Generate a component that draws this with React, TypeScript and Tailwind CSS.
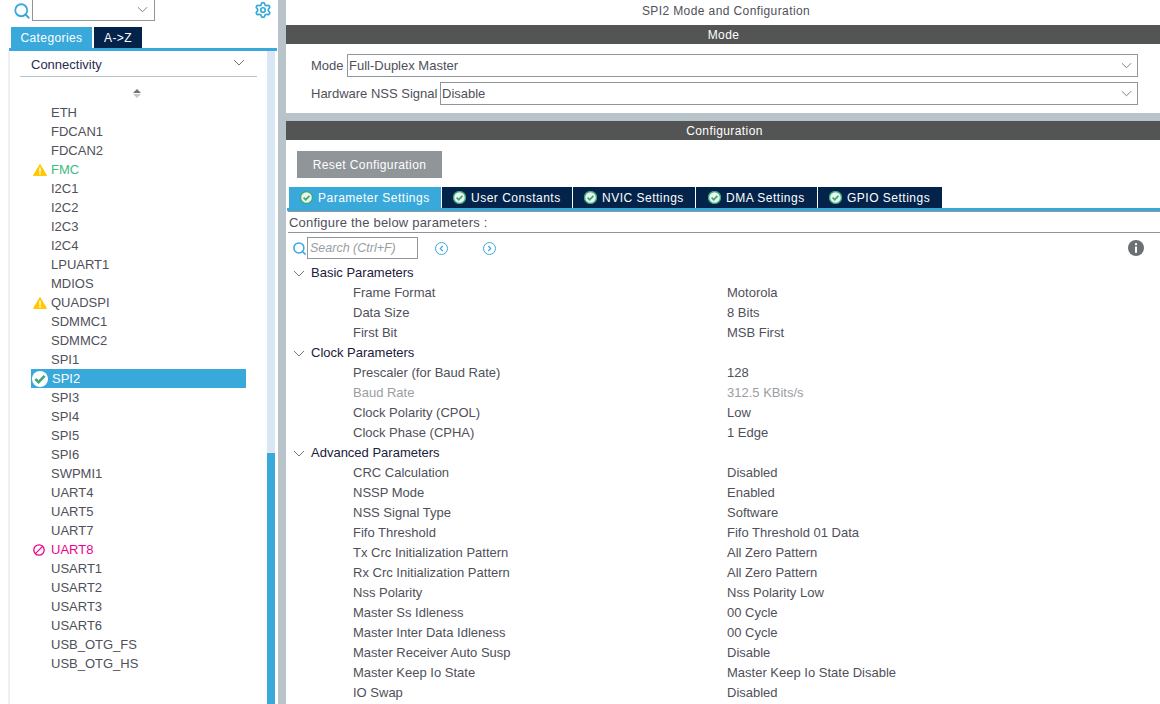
import { Search, Settings } from "lucide-react";

const font = "font-['Liberation_Sans',Arial,sans-serif]";

type Peripheral = { name: string; status?: "warn" | "ok" | "error" };

const peripherals: Peripheral[] = [
  { name: "ETH" },
  { name: "FDCAN1" },
  { name: "FDCAN2" },
  { name: "FMC", status: "warn" },
  { name: "I2C1" },
  { name: "I2C2" },
  { name: "I2C3" },
  { name: "I2C4" },
  { name: "LPUART1" },
  { name: "MDIOS" },
  { name: "QUADSPI", status: "warn" },
  { name: "SDMMC1" },
  { name: "SDMMC2" },
  { name: "SPI1" },
  { name: "SPI2", status: "ok" },
  { name: "SPI3" },
  { name: "SPI4" },
  { name: "SPI5" },
  { name: "SPI6" },
  { name: "SWPMI1" },
  { name: "UART4" },
  { name: "UART5" },
  { name: "UART7" },
  { name: "UART8", status: "error" },
  { name: "USART1" },
  { name: "USART2" },
  { name: "USART3" },
  { name: "USART6" },
  { name: "USB_OTG_FS" },
  { name: "USB_OTG_HS" },
];

const groups: { title: string; rows: [string, string, boolean?][] }[] = [
  {
    title: "Basic Parameters",
    rows: [
      ["Frame Format", "Motorola"],
      ["Data Size", "8 Bits"],
      ["First Bit", "MSB First"],
    ],
  },
  {
    title: "Clock Parameters",
    rows: [
      ["Prescaler (for Baud Rate)", "128"],
      ["Baud Rate", "312.5 KBits/s", true],
      ["Clock Polarity (CPOL)", "Low"],
      ["Clock Phase (CPHA)", "1 Edge"],
    ],
  },
  {
    title: "Advanced Parameters",
    rows: [
      ["CRC Calculation", "Disabled"],
      ["NSSP Mode", "Enabled"],
      ["NSS Signal Type", "Software"],
      ["Fifo Threshold", "Fifo Threshold 01 Data"],
      ["Tx Crc Initialization Pattern", "All Zero Pattern"],
      ["Rx Crc Initialization Pattern", "All Zero Pattern"],
      ["Nss Polarity", "Nss Polarity Low"],
      ["Master Ss Idleness", "00 Cycle"],
      ["Master Inter Data Idleness", "00 Cycle"],
      ["Master Receiver Auto Susp", "Disable"],
      ["Master Keep Io State", "Master Keep Io State Disable"],
      ["IO Swap", "Disabled"],
    ],
  },
];

const tabs = [
  { label: "Parameter Settings", width: "w-[152px]", pad: "pl-[11px]", active: true },
  { label: "User Constants", width: "w-[130px]", pad: "pl-[11px]" },
  { label: "NVIC Settings", width: "w-[122px]", pad: "pl-[11px]" },
  { label: "DMA Settings", width: "w-[121px]", pad: "pl-[12px]" },
  { label: "GPIO Settings", width: "w-[124px]", pad: "pl-[11px]" },
];

function Chevron({ className }: { className: string }) {
  return (
    <svg viewBox="0 0 12 7" className={className} fill="none" stroke="currentColor" strokeWidth="1">
      <path d="M1 1l5 5 5-5" />
    </svg>
  );
}

function Warn() {
  return (
    <svg viewBox="0 0 14 12" className="h-3 w-[14px]">
      <path d="M7 .5L13.6 11.6H.4z" fill="#ffc800" stroke="#ffc800" strokeLinejoin="round" />
      <rect x="6.3" y="3.6" width="1.4" height="4.6" fill="#fff" />
      <rect x="6.3" y="9" width="1.4" height="1.5" fill="#fff" />
    </svg>
  );
}

function OkBadge() {
  return (
    <svg viewBox="0 0 16 16" className="h-4 w-4">
      <circle cx="8" cy="8" r="8" fill="#fff" />
      <path d="M3.4 8l3.2 3.2 6-6.4" fill="none" stroke="#3fa878" strokeWidth="2.6" />
    </svg>
  );
}

function TabCheck() {
  return (
    <svg viewBox="0 0 13 13" className="h-[13px] w-[13px] shrink-0">
      <circle cx="6.5" cy="6.5" r="6" fill="#e8f5ee" stroke="#3fa878" strokeWidth="1.4" />
      <path d="M3.6 6.6l2.1 2.1 3.7-3.9" fill="none" stroke="#3fa878" strokeWidth="1.7" />
    </svg>
  );
}

function Ban() {
  return (
    <svg viewBox="0 0 12 12" className="h-3 w-3" fill="none" stroke="#ec008c" strokeWidth="1.3">
      <circle cx="6" cy="6" r="5.2" />
      <path d="M2.4 9.6l7.2-7.2" />
    </svg>
  );
}

function PeripheralRow({ item }: { item: Peripheral }) {
  const selected = item.status === "ok";
  const tone = selected
    ? "bg-[#39a9dc] text-white"
    : item.status === "warn" && item.name === "FMC"
      ? "text-[#3dbb7f]"
      : item.status === "error"
        ? "text-[#ec008c]"
        : "text-[#50505a]";
  return (
    <div className={`ml-[21px] flex h-[19px] w-[215px] items-center ${tone}`}>
      <span className={`flex shrink-0 ${selected ? "w-[21px] pl-px" : "w-5 pl-0.5"}`}>
        {item.status === "warn" && <Warn />}
        {item.status === "ok" && <OkBadge />}
        {item.status === "error" && <Ban />}
      </span>
      <span>{item.name}</span>
    </div>
  );
}

function Sidebar() {
  return (
    <aside className="flex h-full w-[278px] shrink-0 flex-col bg-white">
      <div className="flex h-[21px] items-center">
        <Search className="ml-[13px] h-[18px] w-[18px] text-[#39a9dc]" strokeWidth={2.4} />
        <div className="ml-px flex h-[22px] w-[123px] -translate-y-px items-center justify-end border border-t-0 border-[#8f9599] bg-white pr-[6px]">
          <Chevron className="h-[7px] w-[11px] text-[#6f7579]" />
        </div>
        <Settings className="mb-[2px] ml-[99px] h-[18px] w-[18px] text-[#39a9dc]" strokeWidth={2.3} />
      </div>
      <div className="ml-[11px] mt-[6px] flex h-[21px] items-stretch gap-[2px] text-[12px] tracking-[0.4px] text-white">
        <div className="flex w-[81px] items-center justify-center bg-[#39a9dc]">Categories</div>
        <div className="flex w-[48px] items-center justify-center bg-[#03234b]">A-&gt;Z</div>
      </div>
      <div className="ml-[9px] mr-px h-[3px] shrink-0 bg-[#39a9dc]" />
      <div className="ml-2 flex min-h-0 flex-1 border-l-2 border-[#eef0f0]">
        <div className="flex min-w-0 flex-1 flex-col">
          <div className="mx-[10px] flex h-[26px] shrink-0 items-center justify-between border-b border-[#b9c4ca] pl-[11px] pr-3 pt-[3px] text-[13px] text-[#2c2c50]">
            <span>Connectivity</span>
            <Chevron className="mb-[5px] h-[7px] w-3 text-[#6f7579]" />
          </div>
          <div className="flex h-[26px] shrink-0 flex-col items-center justify-center pr-[3px] pt-[7px]">
            <span className="h-0 w-0 border-x-[4px] border-b-[4px] border-x-transparent border-b-[#6f7579]" />
            <span className="mt-px h-0 w-0 border-x-[4px] border-t-[4px] border-x-transparent border-t-[#c4c8cb]" />
          </div>
          <div className="text-[13px]">
            {peripherals.map((p) => (
              <PeripheralRow key={p.name} item={p} />
            ))}
          </div>
        </div>
        <div className="mr-[3px] flex w-2 shrink-0 flex-col justify-end bg-[#d9e7f4]">
          <div className="h-[251px] bg-[#39a9dc]" />
        </div>
      </div>
    </aside>
  );
}

function ModeSelect({ label, value, labelClass }: { label: string; value: string; labelClass: string }) {
  return (
    <div className="flex h-[23px] items-center pl-[25px] pr-[22px] text-[13px]">
      <span className={`shrink-0 text-[#50505a] ${labelClass}`}>{label}</span>
      <div className="flex h-[23px] flex-1 items-center justify-between border border-[#8f9599] pl-px pr-[5px] text-[#50505a]">
        <span>{value}</span>
        <Chevron className="h-[7px] w-[11px] text-[#6f7579]" />
      </div>
    </div>
  );
}

function ConfigPanel() {
  return (
    <div className="flex min-h-0 flex-1 flex-col bg-white">
      <div className="flex h-[19px] shrink-0 items-center justify-center bg-[#535554] pl-[3px] text-[12px] tracking-[0.4px] text-white">
        Configuration
      </div>
      <button className="ml-[11px] mt-[11px] flex h-[27px] w-[145px] shrink-0 items-center justify-center bg-[#90959a] text-[12px] tracking-[0.4px] text-white">
        Reset Configuration
      </button>
      <div className="ml-[3px] mt-[9px] flex h-[21px] shrink-0 gap-px">
        {tabs.map((t) => (
          <div
            key={t.label}
            className={`flex ${t.width} ${t.pad} items-center gap-[5px] text-[12px] tracking-[0.5px] text-white ${
              t.active ? "bg-[#39a9dc]" : "bg-[#03234b]"
            }`}
          >
            <TabCheck />
            <span className="whitespace-nowrap">{t.label}</span>
          </div>
        ))}
      </div>
      <div className="ml-px h-[3px] shrink-0 bg-[#39a9dc]" />
      <div className="ml-[2px] flex h-[22px] shrink-0 items-center border-y border-[#8f9599] pl-px pt-[2px] text-[13px] tracking-[0.2px] text-[#50505a]">
        Configure the below parameters :
      </div>
      <div className="flex h-[30px] shrink-0 items-center pl-[6px] pr-4">
        <Search className="h-[15px] w-[15px] text-[#39a9dc]" strokeWidth={2.4} />
        <div className="flex h-[22px] w-[111px] items-center border border-[#8f9599] pl-[2px] text-[12.5px] italic text-[#9a9ea2]">
          Search (Ctrl+F)
        </div>
        <span className="ml-[17px] flex h-[13px] w-[13px] items-center justify-center rounded-full border-[1.5px] border-[#39a9dc]">
          <svg viewBox="0 0 6 8" className="h-[7px] w-[5px]" fill="none" stroke="#39a9dc" strokeWidth="1.3">
            <path d="M4.5 1L1.5 4l3 3" />
          </svg>
        </span>
        <span className="ml-[35px] flex h-[13px] w-[13px] items-center justify-center rounded-full border-[1.5px] border-[#39a9dc]">
          <svg viewBox="0 0 6 8" className="h-[7px] w-[5px]" fill="none" stroke="#39a9dc" strokeWidth="1.3">
            <path d="M1.5 1l3 3-3 3" />
          </svg>
        </span>
        <svg viewBox="0 0 16 16" className="ml-auto h-4 w-4">
          <circle cx="8" cy="8" r="8" fill="#6b7075" />
          <rect x="7" y="6.6" width="2" height="6.2" fill="#fff" />
          <rect x="7" y="3.2" width="2" height="2" fill="#fff" />
        </svg>
      </div>
      <div className="text-[13px]">
        {groups.map((g) => (
          <div key={g.title}>
            <div className="flex h-5 items-center pl-[7px] text-[#20203a]">
              <Chevron className="h-[7px] w-[12px] text-[#6f7579]" />
              <span className="ml-[6px]">{g.title}</span>
            </div>
            {g.rows.map(([name, value, disabled]) => (
              <div key={name} className={`flex h-5 items-center pl-[67px] ${disabled ? "text-[#9a9ea2]" : "text-[#50505a]"}`}>
                <span className="w-[374px] shrink-0">{name}</span>
                <span>{value}</span>
              </div>
            ))}
          </div>
        ))}
      </div>
    </div>
  );
}

export default function App() {
  return (
    <div className={`flex h-[704px] w-[1160px] overflow-hidden bg-white ${font}`}>
      <Sidebar />
      <div className="w-2 shrink-0 bg-[#b9c4ca]" />
      <main className="flex min-w-0 flex-1 flex-col bg-[#b9c4ca]">
        <div className="flex h-[113px] shrink-0 flex-col bg-white">
          <div className="flex h-[25px] shrink-0 items-center justify-center pb-[5px] pl-[6px] pt-px text-[12px] tracking-[0.4px] text-[#50505a]">
            SPI2 Mode and Configuration
          </div>
          <div className="flex h-[19px] shrink-0 items-center justify-center bg-[#535554] pl-px text-[12px] tracking-[0.4px] text-white">
            Mode
          </div>
          <div className="mt-[10px] flex flex-col gap-[5px]">
            <ModeSelect label="Mode" value="Full-Duplex Master" labelClass="w-[36px]" />
            <ModeSelect label="Hardware NSS Signal" value="Disable" labelClass="w-[129px]" />
          </div>
        </div>
        <div className="h-2 shrink-0" />
        <ConfigPanel />
      </main>
    </div>
  );
}
